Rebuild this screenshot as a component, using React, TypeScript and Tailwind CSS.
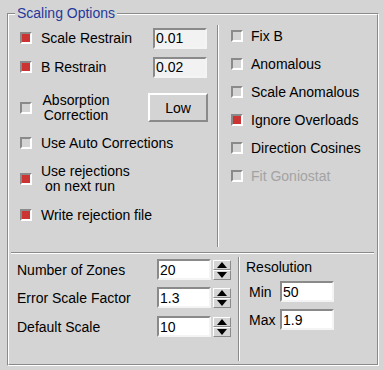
import React from "react";

const raised =
  "border border-t-white border-l-white border-r-[#8a8a8a] border-b-[#8a8a8a]";
const sunken =
  "border-2 border-t-[#8a8a8a] border-l-[#8a8a8a] border-r-[#f4f4f4] border-b-[#f4f4f4]";

function Box({ on }: { on?: boolean }) {
  return (
    <span
      className={`block h-[12px] w-[12px] shrink-0 border-2 border-t-[#8a8a8a] border-l-[#8a8a8a] border-r-white border-b-white ${
        on ? "bg-[#cc3333]" : "bg-[#d4d4d4]"
      }`}
    />
  );
}

function Entry({
  value,
  w,
  fill = "bg-white",
}: {
  value: string;
  w: string;
  fill?: string;
}) {
  return (
    <div
      className={`flex h-[21px] shrink-0 items-center pl-[1px] leading-none ${w} ${fill} ${sunken}`}
    >
      {value}
    </div>
  );
}

function Spinner() {
  return (
    <div className="ml-[2px] flex flex-col">
      <div className={`flex h-[10px] w-[18px] items-center justify-center bg-[#d4d4d4] ${raised}`}>
        <svg width="10" height="6" viewBox="0 0 10 6">
          <polygon points="5,0 10,6 0,6" fill="#000" />
        </svg>
      </div>
      <div className={`flex h-[10px] w-[18px] items-center justify-center bg-[#d4d4d4] ${raised}`}>
        <svg width="10" height="6" viewBox="0 0 10 6">
          <polygon points="0,0 10,0 5,6" fill="#000" />
        </svg>
      </div>
    </div>
  );
}

function RightCheck({
  label,
  on,
  disabled,
}: {
  label: string;
  on?: boolean;
  disabled?: boolean;
}) {
  return (
    <div className="flex h-[28px] items-center">
      <Box on={on} />
      <span className={`ml-[8px] ${disabled ? "text-[#a3a3a3]" : ""}`}>{label}</span>
    </div>
  );
}

export default function App() {
  return (
    <div className="h-[370px] w-[383px] bg-[#d4d4d4] pl-[7px] pt-[13px] font-['Liberation_Sans',Arial,sans-serif] text-[14px] leading-[16px] text-black">
      <div className="relative h-[353px] w-[372px] border border-t-[#8a8a8a] border-l-[#8a8a8a] border-r-white border-b-white">
        <div className="flex h-full flex-col border border-t-white border-l-white border-r-[#8a8a8a] border-b-[#8a8a8a]">
          {/* top area */}
          <div className="flex h-[237px]">
            <div className="flex w-[208px] flex-col pl-[11px] pt-[12px]">
              <div className="flex h-[22px] items-center">
                <Box on />
                <span className="ml-[9px] w-[112px]">Scale Restrain</span>
                <Entry value="0.01" w="w-[54px]" fill="bg-[#f2f2f2]" />
              </div>
              <div className="mt-[7px] flex h-[22px] items-center">
                <Box on />
                <span className="ml-[9px] w-[112px]">B Restrain</span>
                <Entry value="0.02" w="w-[54px]" fill="bg-[#f2f2f2]" />
              </div>
              <div className="mt-[15px] flex h-[29px] items-center">
                <Box />
                <span className="ml-[9px] w-[70px] text-center leading-[15px]">
                  Absorption
                  <br />
                  Correction
                </span>
                <button
                  className={`ml-[37px] flex h-[29px] w-[60px] items-center justify-center border-2 border-t-white border-l-white border-r-[#8a8a8a] border-b-[#8a8a8a] bg-[#d4d4d4]`}
                >
                  Low
                </button>
              </div>
              <div className="mt-[12px] flex h-[18px] items-center">
                <Box />
                <span className="ml-[9px]">Use Auto Corrections</span>
              </div>
              <div className="mt-[11px] flex h-[32px] items-center">
                <Box on />
                <span className="ml-[9px] whitespace-pre leading-[15px]">
                  {"Use rejections\n on next run"}
                </span>
              </div>
              <div className="mt-[11px] flex h-[18px] items-center">
                <Box on />
                <span className="ml-[9px]">Write rejection file</span>
              </div>
            </div>
            <div className="mb-[5px] mt-[10px] w-[2px] border-l border-r border-l-[#8a8a8a] border-r-white" />
            <div className="flex flex-1 flex-col pl-[12px] pt-[7px]">
              <RightCheck label="Fix B" />
              <RightCheck label="Anomalous" />
              <RightCheck label="Scale Anomalous" />
              <RightCheck label="Ignore Overloads" on />
              <RightCheck label="Direction Cosines" />
              <RightCheck label="Fit Goniostat" disabled />
            </div>
          </div>
          {/* groove */}
          <div className="ml-[2px] mr-[3px] h-[2px] border-t border-b border-t-[#8a8a8a] border-b-white" />
          {/* bottom area */}
          <div className="flex flex-1">
            <div className="flex w-[229px] flex-col pl-[8px] pt-[5px]">
              <div className="flex h-[21px] items-center">
                <span className="w-[140px]">Number of Zones</span>
                <Entry value="20" w="w-[54px]" />
                <Spinner />
              </div>
              <div className="mt-[7px] flex h-[21px] items-center">
                <span className="w-[140px]">Error Scale Factor</span>
                <Entry value="1.3" w="w-[54px]" />
                <Spinner />
              </div>
              <div className="mt-[8px] flex h-[21px] items-center">
                <span className="w-[140px]">Default Scale</span>
                <Entry value="10" w="w-[54px]" />
                <Spinner />
              </div>
            </div>
            <div className="mb-[3px] mt-[3px] w-[2px] border-l border-r border-l-[#8a8a8a] border-r-white" />
            <div className="flex flex-1 flex-col pl-[6px] pt-[5px]">
              <div className="h-[16px]">Resolution</div>
              <div className="mt-[6px] flex h-[21px] items-center pl-[3px]">
                <span className="w-[31px]">Min</span>
                <Entry value="50" w="w-[54px]" />
              </div>
              <div className="mt-[7px] flex h-[21px] items-center pl-[3px]">
                <span className="w-[31px]">Max</span>
                <Entry value="1.9" w="w-[54px]" />
              </div>
            </div>
          </div>
        </div>
        <div className="absolute -top-[9px] left-[7px] bg-[#d4d4d4] px-[2px] text-[#24399c]">
          Scaling Options
        </div>
      </div>
    </div>
  );
}
